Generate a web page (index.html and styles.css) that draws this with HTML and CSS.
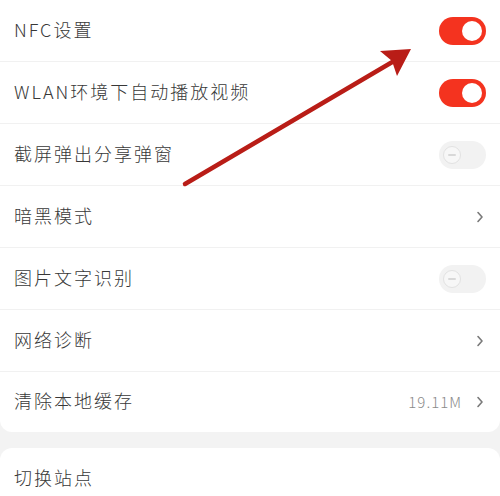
FILE: index.html
```html
<!DOCTYPE html>
<html lang="zh-CN">
<head>
<meta charset="utf-8">
<title>设置</title>
<link rel="stylesheet" href="styles.css">
</head>
<body>
<div class="page">
  <div class="card card-top">
    <div class="row"><span class="label">NFC设置</span><span class="switch on"><span class="knob"></span></span></div>
    <div class="row"><span class="label">WLAN环境下自动播放视频</span><span class="switch on"><span class="knob"></span></span></div>
    <div class="row"><span class="label">截屏弹出分享弹窗</span><span class="switch off"><span class="knob"><span class="dash"></span></span></span></div>
    <div class="row"><span class="label">暗黑模式</span><span class="chev"><svg width="8" height="12" viewBox="0 0 8 12"><path d="M2 1.5 L6 6 L2 10.5" fill="none" stroke="#7a7a7a" stroke-width="1.6" stroke-linecap="round" stroke-linejoin="round"/></svg></span></div>
    <div class="row"><span class="label">图片文字识别</span><span class="switch off"><span class="knob"><span class="dash"></span></span></span></div>
    <div class="row"><span class="label">网络诊断</span><span class="chev"><svg width="8" height="12" viewBox="0 0 8 12"><path d="M2 1.5 L6 6 L2 10.5" fill="none" stroke="#7a7a7a" stroke-width="1.6" stroke-linecap="round" stroke-linejoin="round"/></svg></span></div>
    <div class="row"><span class="label">清除本地缓存</span><span class="extra"><span class="value">19.11M</span><span class="chev"><svg width="8" height="12" viewBox="0 0 8 12"><path d="M2 1.5 L6 6 L2 10.5" fill="none" stroke="#7a7a7a" stroke-width="1.6" stroke-linecap="round" stroke-linejoin="round"/></svg></span></span></div>
  </div>
  <div class="card card-bottom">
    <div class="row"><span class="label">切换站点</span></div>
  </div>
  <svg class="arrow" width="500" height="496" viewBox="0 0 500 496">
    <line x1="185" y1="184" x2="394" y2="61" stroke="#b91d17" stroke-width="4.5" stroke-linecap="round"/>
    <polygon points="411,49 380,51 392,61 397,76" fill="#b91d17"/>
  </svg>
</div>
</body>
</html>
```
FILE: styles.css
```css
html, body {
  margin: 0;
  padding: 0;
}
body {
  background: #f3f3f3;
  font-family: "Noto Sans CJK SC", "Noto Sans", sans-serif;
  color: #383838;
}
.page {
  position: relative;
  width: 500px;
  height: 496px;
  overflow: hidden;
  display: flex;
  flex-direction: column;
  gap: 16px;
}
.card {
  background: #ffffff;
  display: flex;
  flex-direction: column;
}
.card-top {
  border-radius: 0 0 12px 12px;
}
.card-bottom {
  border-radius: 12px 12px 0 0;
}
.row {
  height: 61px;
  display: flex;
  align-items: center;
  justify-content: space-between;
  padding: 0 14px;
  border-bottom: 1px solid #f1f1f1;
}
.card-top .row:last-child {
  height: 60px;
  border-bottom: none;
}
.label {
  font-size: 18px;
  letter-spacing: 2px;
  font-weight: 300;
  padding-bottom: 4px;
}
.switch {
  width: 47px;
  height: 28px;
  border-radius: 14px;
  display: flex;
  align-items: center;
  box-sizing: border-box;
  padding: 0 4px;
}
.switch.on {
  background: #f4331f;
  justify-content: flex-end;
}
.switch.off {
  background: #f2f2f2;
  justify-content: flex-start;
}
.switch.on .knob {
  width: 20px;
  height: 20px;
  border-radius: 50%;
  background: #ffffff;
}
.switch.off .knob {
  width: 16px;
  height: 16px;
  border-radius: 50%;
  background: #f7f7f7;
  border: 1.5px solid #e2e2e2;
  display: flex;
  align-items: center;
  justify-content: center;
}
.dash {
  width: 8px;
  height: 2px;
  background: #d8d8d8;
  border-radius: 1px;
}
.chev {
  display: flex;
  align-items: center;
  margin-right: 2px;
}
.extra {
  display: flex;
  align-items: center;
  gap: 14px;
}
.value {
  font-size: 15px;
  letter-spacing: 1px;
  color: #8a8a8a;
  font-weight: 300;
  padding-bottom: 2px;
}
.arrow {
  position: absolute;
  left: 0;
  top: 0;
  pointer-events: none;
}
```
